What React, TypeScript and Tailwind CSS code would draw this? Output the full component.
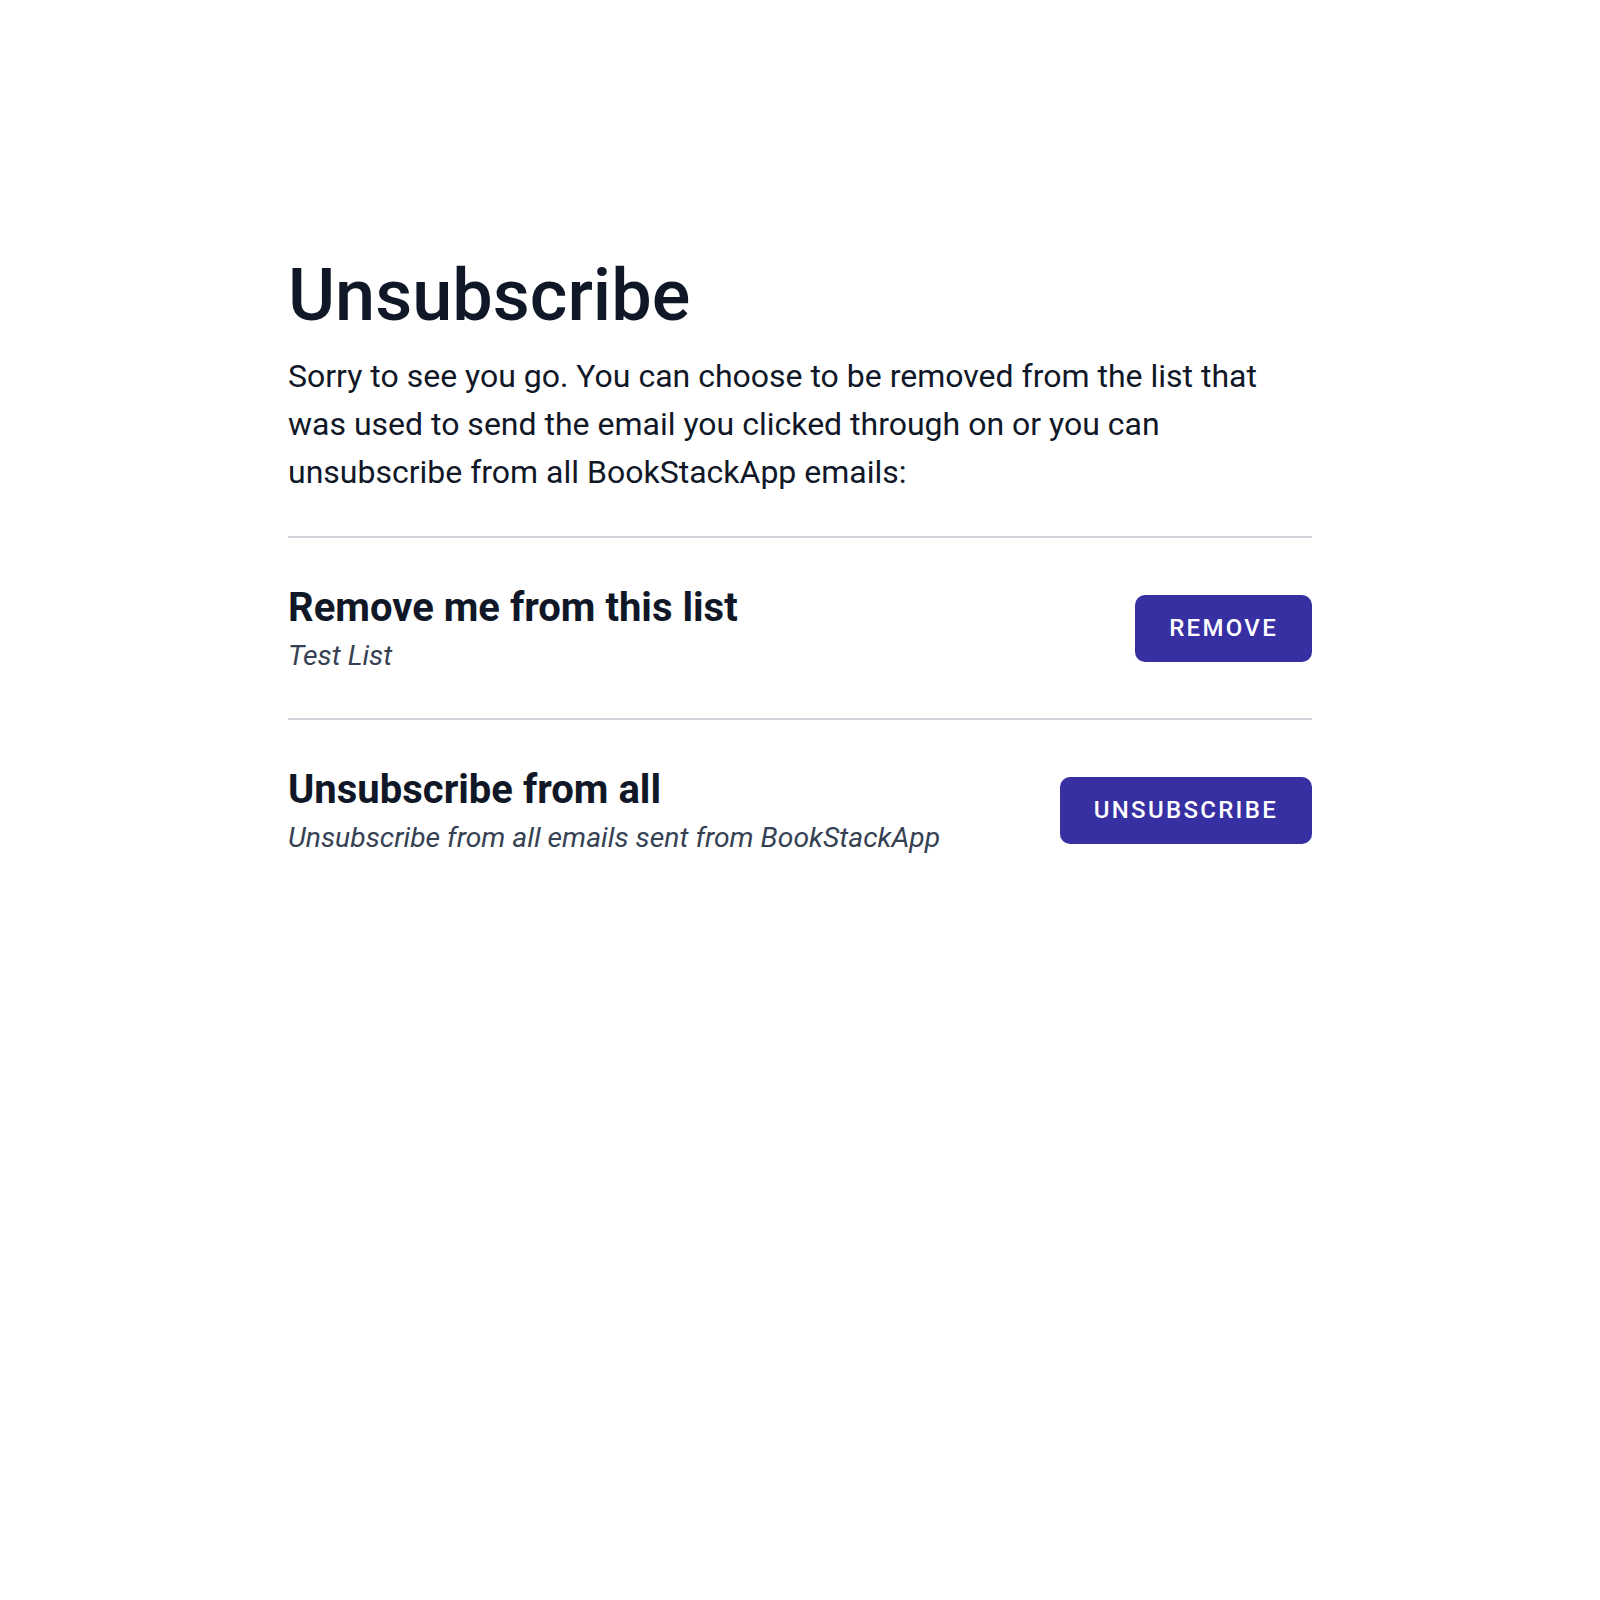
import React from 'react';

const Option: React.FC<{ title: string; note: string; action: string }> = ({ title, note, action }) => (
    <div className="flex items-center justify-between gap-8 border-t-2 border-gray-300">
        <div className="pt-12 pb-[44px]">
            <h2 className="text-[40px] font-bold text-gray-900 leading-[44px]">{title}</h2>
            <p className="mt-2 text-[28.3px] italic text-gray-700 leading-[36px]">{note}</p>
        </div>
        <button className="flex-shrink-0 bg-[#3730a3] text-white text-[24px] font-medium tracking-[2.3px] uppercase rounded-[10px] px-[34px] h-[67px]">
            {action}
        </button>
    </div>
);

export default function App() {
    return (
        <div className="min-h-[1600px] bg-white font-['Roboto',sans-serif]">
            <div className="max-w-5xl mx-auto pt-[260px]">
                <h1 className="text-7xl font-medium text-gray-900 leading-none">Unsubscribe</h1>
                <p className="mt-5 text-[32px] text-gray-900 leading-[48px]">
                    Sorry to see you go. You can choose to be removed from the list that was used to send the email you clicked through on or you can unsubscribe from all BookStackApp emails:
                </p>
                <div className="mt-10">
                    <Option title="Remove me from this list" note="Test List" action="Remove" />
                    <Option title="Unsubscribe from all" note="Unsubscribe from all emails sent from BookStackApp" action="Unsubscribe" />
                </div>
            </div>
        </div>
    );
}
